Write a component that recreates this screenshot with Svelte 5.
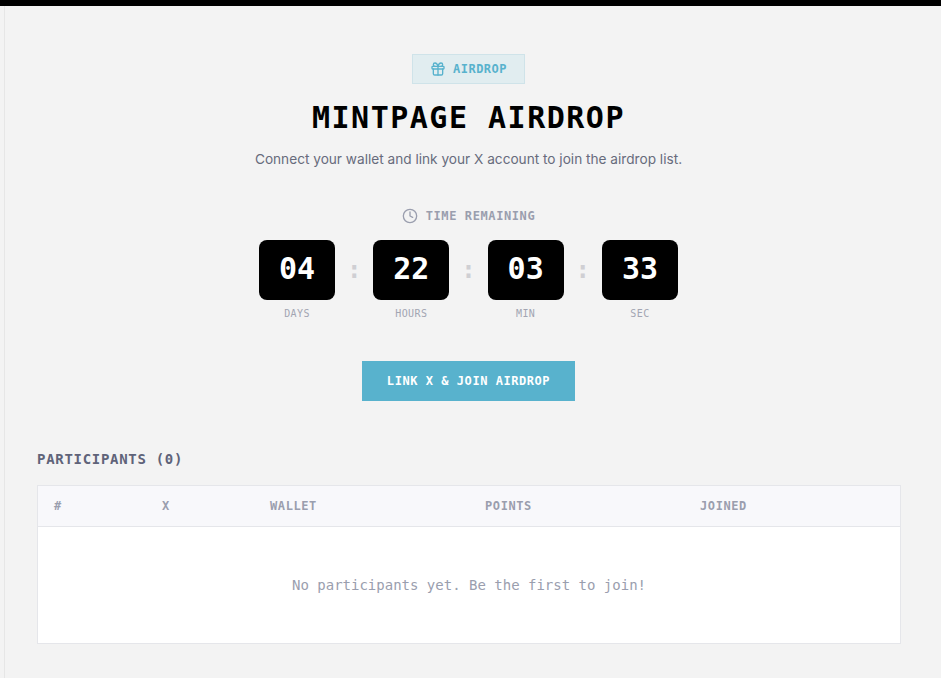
<script>
  const units = [
    { value: '04', label: 'DAYS' },
    { value: '22', label: 'HOURS' },
    { value: '03', label: 'MIN' },
    { value: '33', label: 'SEC' }
  ];
  const columns = ['#', 'X', 'WALLET', 'POINTS', 'JOINED'];
</script>

<div class="topbar"></div>
<div class="shell">
  <main class="page">
    <section class="hero">
      <div class="badge">
        <svg width="16" height="16" viewBox="0 0 24 24" fill="none" stroke="currentColor" stroke-width="2" stroke-linecap="round" stroke-linejoin="round">
          <rect x="3" y="8" width="18" height="4" rx="1" />
          <path d="M12 8v13" />
          <path d="M19 12v7a2 2 0 0 1-2 2H7a2 2 0 0 1-2-2v-7" />
          <path d="M7.5 8a2.5 2.5 0 0 1 0-5A4.8 8 0 0 1 12 8a4.8 8 0 0 1 4.5-5 2.5 2.5 0 0 1 0 5" />
        </svg>
        <span>AIRDROP</span>
      </div>
      <h1>MINTPAGE AIRDROP</h1>
      <p class="sub">Connect your wallet and link your X account to join the airdrop list.</p>

      <div class="remaining">
        <svg width="16" height="16" viewBox="0 0 24 24" fill="none" stroke="currentColor" stroke-width="2" stroke-linecap="round" stroke-linejoin="round">
          <circle cx="12" cy="12" r="10" />
          <path d="M12 6v6l4 2" />
        </svg>
        <span>TIME REMAINING</span>
      </div>

      <div class="countdown">
        {#each units as unit, i}
          {#if i > 0}
            <div class="colon">:</div>
          {/if}
          <div class="unit">
            <div class="box">{unit.value}</div>
            <div class="label">{unit.label}</div>
          </div>
        {/each}
      </div>

      <button class="join">LINK X &amp; JOIN AIRDROP</button>
    </section>

    <h2>PARTICIPANTS (0)</h2>
    <div class="table">
      <div class="head">
        {#each columns as col}
          <div class="cell">{col}</div>
        {/each}
      </div>
      <div class="empty">No participants yet. Be the first to join!</div>
    </div>
  </main>
</div>

<style>
  :global(body) {
    background: #f3f3f3;
    font-family: Inter, sans-serif;
  }
  .topbar {
    height: 6px;
    background: #000;
  }
  .shell {
    margin-left: 4px;
    border-left: 1px solid #e6e6e6;
    height: 672px;
    box-sizing: border-box;
    overflow: hidden;
  }
  .page {
    padding: 48px 41px 0 32px;
    font-family: "DejaVu Sans Mono", monospace;
  }
  .hero {
    display: flex;
    flex-direction: column;
    align-items: center;
  }
  .badge {
    display: flex;
    align-items: center;
    gap: 7px;
    height: 30px;
    box-sizing: border-box;
    padding: 0 17px;
    background: #e1edf0;
    border: 1px solid #cfe3e9;
    color: #58b2cd;
    font-size: 12px;
    font-weight: 700;
    letter-spacing: 0.5px;
  }
  h1 {
    margin: 16px 0 0;
    font-size: 30px;
    line-height: 36px;
    font-weight: 700;
    letter-spacing: 1.5px;
    color: #000;
  }
  .sub {
    margin: 13px 0 0;
    font-family: Inter, sans-serif;
    font-size: 13.65px;
    line-height: 20px;
    color: #676b7c;
  }
  .remaining {
    display: flex;
    align-items: center;
    gap: 8px;
    margin-top: 39px;
    color: #9a9eae;
    font-size: 12px;
    font-weight: 700;
    letter-spacing: 0.6px;
  }
  .countdown {
    display: flex;
    margin-top: 16px;
  }
  .unit {
    display: flex;
    flex-direction: column;
    align-items: center;
  }
  .box {
    width: 76px;
    height: 60px;
    box-sizing: border-box;
    padding-bottom: 3px;
    display: flex;
    align-items: center;
    justify-content: center;
    background: #000;
    border-radius: 8px;
    color: #fff;
    font-size: 30px;
    font-weight: 700;
  }
  .label {
    margin-top: 8px;
    font-size: 10px;
    line-height: 12px;
    letter-spacing: 0.4px;
    color: #a2a5b2;
  }
  .colon {
    width: 38.33px;
    height: 60px;
    display: flex;
    align-items: center;
    justify-content: center;
    color: #cfcfd3;
    font-size: 24px;
    font-weight: 700;
  }
  .join {
    margin-top: 41px;
    height: 40px;
    width: 213px;
    padding: 0;
    border: 0;
    background: #58b2cd;
    color: #fff;
    font-family: inherit;
    font-size: 12px;
    font-weight: 700;
    letter-spacing: 0.55px;
  }
  h2 {
    margin: 49px 0 0;
    font-size: 14px;
    line-height: 18px;
    font-weight: 700;
    letter-spacing: 0.7px;
    color: #5f6379;
  }
  .table {
    margin-top: 17px;
    background: #fff;
    border: 1px solid #e5e6ea;
    width: 864px;
    box-sizing: border-box;
  }
  .head {
    display: grid;
    grid-template-columns: 108px 108px 215px 215px 1fr;
    height: 40px;
    background: #f8f8fb;
    border-bottom: 1px solid #e5e6ea;
  }
  .cell {
    display: flex;
    align-items: center;
    padding-left: 16px;
    font-size: 12px;
    font-weight: 700;
    letter-spacing: 0.6px;
    color: #9a9eae;
  }
  .empty {
    height: 116px;
    display: flex;
    align-items: center;
    justify-content: center;
    font-size: 14px;
    color: #9a9eae;
  }
</style>
